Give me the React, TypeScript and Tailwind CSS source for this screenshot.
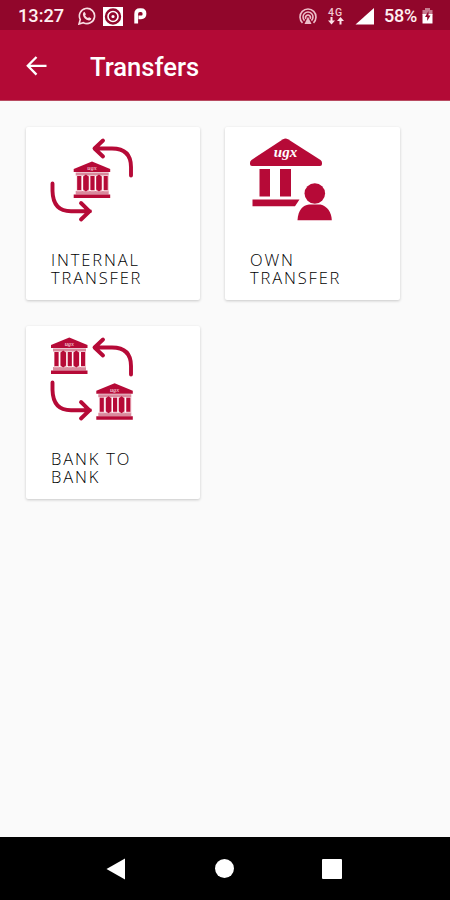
import React from "react";

const Bank: React.FC<{ x: number; y: number }> = ({ x, y }) => (
    <g transform={`translate(${x} ${y})`}>
        <path fill="#b60a37" d="M18.3 0 36.5 7.5V10.5H0V7.5Z" />
        <path fill="#d98a9d" d="M2 11H35V14H2ZM2 29.5H35V33H2Z" />
        <path
            fill="#f0bcc8"
            d="M3 14H8V30H3ZM9.5 14H15.500V30H9.500ZM17 14H21V30H17ZM22.500 14H28.500V30H22.500ZM30 14H35V30H30Z"
        />
        <path
            fill="#b60a37"
            d="M3.500 14.500H7.500V28.500H3.500ZM9.500 15 12.200 13 15 15V28L12.200 30 9.500 28ZM16.700 14.500H20.800V28.500H16.700ZM22.500 15 25.300 13 28 15V28L25.300 30 22.500 28ZM30 14.500H34V28.500H30ZM0 33H36.500V36.500H0Z"
        />
        <text
            x="18.3"
            y="8.300"
            textAnchor="middle"
            fill="#edb5c2"
            className="font-['Liberation_Serif',serif] text-[6px] font-bold italic"
        >
            ugx
        </text>
    </g>
);

const Arrows: React.FC = () => (
    <g fill="none" stroke="#b60a37" strokeWidth="3.9" strokeLinecap="round" strokeLinejoin="round">
        <path d="M53 3.500 44.500 11.500 53 19.500M45 11.500H62Q81 11.500 81 30V38.500" />
        <path d="M2.500 46.500V54Q3 74.300 21 74.300H40M31 66 39.500 74.300 31 82.500" />
    </g>
);

const InternalIcon: React.FC = () => (
    <svg width="84" height="86" viewBox="0 0 84 86">
        <Arrows />
        <Bank x={23.7} y={24.5} />
    </svg>
);

const OwnIcon: React.FC = () => (
    <svg width="84" height="86" viewBox="0 0 84 86" fill="#b60a37">
        <path d="M34 2.200Q36.500.800 39 2.200L71.500 23Q73 24 73 26V27Q73 29 71 29H3Q1 29 1 27V26Q1 24 2.500 23Z" />
        <path d="M10.500 32H21V59.500H10.500ZM31 32H42V59.500H31ZM3.500 62.500H50.500L46 69.300H3.500Z" />
        <circle cx="65.800" cy="56.500" r="10.300" />
        <path d="M48.500 83.300C49 73 54 68 60 67.500H71.500C78 69 82.500 75 82.800 83.300Z" />
        <text
            x="36.500"
            y="20"
            textAnchor="middle"
            fill="#fff"
            className="font-['Liberation_Serif',serif] text-[15px] font-bold italic"
        >
            ugx
        </text>
    </svg>
);

const BankToBankIcon: React.FC = () => (
    <svg width="84" height="86" viewBox="0 0 84 86">
        <Arrows />
        <Bank x={1} y={1.5} />
        <Bank x={46.3} y={47.3} />
    </svg>
);

const StatusBar: React.FC = () => (
    <div className="flex h-[30px] items-center bg-[#91062b] pt-[2px] pl-[18px] text-[17.500px] font-medium text-[#fff0f2]">
        <span className="w-[60px] pt-px text-[18.200px] leading-none">13:27</span>
        <svg width="18" height="18" viewBox="0 0 18 18" fill="none" stroke="#f8dce2">
            <path strokeWidth="1.600" d="M1 17 2.300 12.600A7.600 7.600 0 1 1 5.400 15.700Z" />
            <path
                fill="#f8dce2"
                stroke="none"
                d="M6.500 4.800 7.900 7.200 7.100 8.400Q8.100 10.100 9.900 11L11.100 10.200 13.400 11.500Q12.900 13.800 10.800 13.500 5.800 12.400 4.900 7.800 4.800 5.500 6.500 4.800Z"
            />
        </svg>
        <svg className="ml-[7px]" width="20" height="19" viewBox="0 0 20 19">
            <rect width="20" height="19" fill="#fff" />
            <circle cx="10" cy="9.500" r="7" fill="#fff" stroke="#91062b" strokeWidth="2.400" />
            <circle cx="10" cy="9.500" r="2.900" fill="none" stroke="#91062b" strokeWidth="2.600" />
        </svg>
        <svg className="ml-[11px]" width="13" height="16" viewBox="0 0 13 16" fill="none">
            <path
                stroke="#fff"
                strokeWidth="3.800"
                strokeLinejoin="round"
                d="M2.200 15.500V6Q2.200 2.200 6 2.200H7Q10.500 2.200 10.500 5.800T7 9.400H4.500"
            />
        </svg>
        <svg className="ml-[152px]" width="18" height="17" viewBox="0 0 18 17" fill="none" stroke="#eebfca" strokeWidth="1.600">
            <path d="M3.500 14.800A8 8 0 1 1 14.500 14.800M5.500 12.600A5 5 0 1 1 12.500 12.600M7 10.800A2.400 2.400 0 1 1 11 10.800" />
            <path fill="#eebfca" stroke="none" d="M9 8.800 12.500 16H5.500Z" />
        </svg>
        <div className="ml-[10px] flex w-[17px] flex-col items-center">
            <span className="text-[10.500px] leading-[9px] tracking-[1px] text-[#f2c8d1]">4G</span>
            <svg width="16" height="8" viewBox="0 0 16 8" fill="#fbe3e8">
                <path d="M2.500 0H4.500V3.500H7L3.500 7.500 0 3.500H2.500ZM11.500 7.500H13.500V4H16L12.500 0 9 4H11.500Z" />
            </svg>
        </div>
        <svg className="ml-[11px]" width="20" height="17" viewBox="0 0 20 17">
            <path fill="#fff" d="M19 0V16.500H.500Z" />
        </svg>
        <span className="ml-[9px] w-[34px] text-[18px] leading-none tracking-[-0.200px]">58%</span>
        <svg className="ml-[4px]" width="11" height="16" viewBox="0 0 11 16">
            <path fill="#c77c90" d="M3 0H8V2H10.500V7H.500V2H3Z" />
            <path fill="#fff" d="M.500 6H10.500V15.500H.500Z" />
            <path fill="#91062b" d="M6.500 3 3 9H5.200V13L8.500 7.500H6.500Z" />
        </svg>
    </div>
);

const cards = [
    { lines: ["INTERNAL", "TRANSFER"], icon: <InternalIcon /> },
    { lines: ["OWN", "TRANSFER"], icon: <OwnIcon /> },
    { lines: ["BANK TO", "BANK"], icon: <BankToBankIcon /> },
];

const App: React.FC = () => {
    return (
        <div className="flex h-[900px] w-[450px] flex-col overflow-hidden bg-[#fafafa] font-[Roboto,sans-serif]">
            <StatusBar />

            <header className="flex h-[71px] items-center border-b border-[#b84a60] bg-[#b30a36] pt-[2px] pl-[26px] text-white">
                <svg width="21" height="20" viewBox="0 0 21 20" fill="none" stroke="#fff" strokeWidth="2.300">
                    <path d="M10.500 1 1.800 9.800 10.500 18.600M2 9.800H20.500" />
                </svg>
                <h1 className="ml-[43px] pt-[3px] text-[25.600px] leading-none font-medium">Transfers</h1>
            </header>

            <main className="grid flex-1 grid-cols-[174px_175px] content-start gap-x-[25px] gap-y-[26px] pt-[26px] pl-[26px]">
                {cards.map((card, idx) => (
                    <div
                        key={idx}
                        className="h-[173px] rounded-[2px] bg-white pt-[10px] pl-[24px] shadow-[0_1px_3px_rgba(0,0,0,0.2)]"
                    >
                        {card.icon}
                        <div className="mt-[28px] flex flex-col pl-px font-['Open_Sans',sans-serif] text-[16.500px] leading-[18px] font-light tracking-[1.850px] text-black">
                            {card.lines.map((line) => (
                                <span key={line}>{line}</span>
                            ))}
                        </div>
                    </div>
                ))}
            </main>

            <nav className="flex h-[63px] items-center bg-black pl-[106px]">
                <svg width="20" height="22" viewBox="0 0 20 22">
                    <path fill="#fff" d="M.500 11 19 .500V21.500Z" />
                </svg>
                <div className="ml-[89px] h-[19px] w-[19px] rounded-full bg-white" />
                <div className="ml-[88px] h-[20px] w-[20px] rounded-[1px] bg-white" />
            </nav>
        </div>
    );
};

export default App;
